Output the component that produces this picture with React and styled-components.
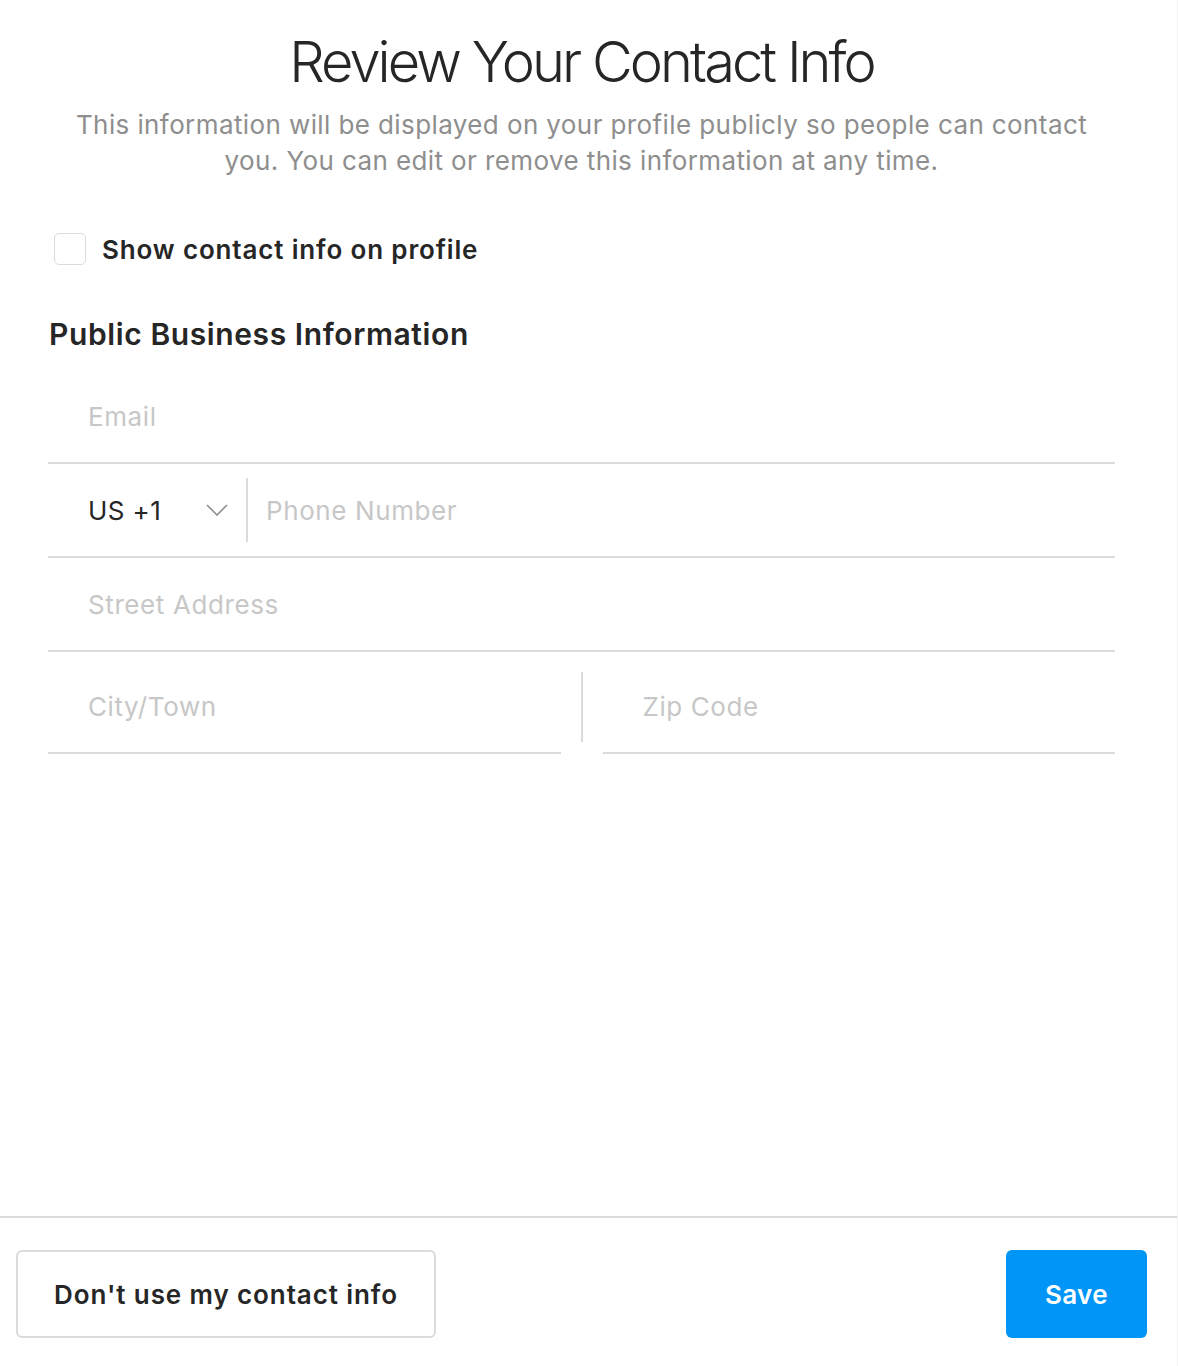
import React from "react";
import styled, { createGlobalStyle } from "styled-components";

const GlobalStyle = createGlobalStyle`
  html, body {
    margin: 0;
    padding: 0;
    background: #ffffff;
  }
  body {
    font-family: Inter, "Liberation Sans", sans-serif;
    color: #262626;
  }
`;

const StyledPage = styled.div`
  width: 1178px;
  height: 1366px;
  display: flex;
  flex-direction: column;
  box-sizing: border-box;
  border-right: 1px solid #f4f4f4;
`;

const StyledContent = styled.div`
  flex: 1;
  padding: 30px 62px 0 48px;
  display: flex;
  flex-direction: column;
`;

const StyledTitle = styled.h1`
  margin: 0;
  text-align: center;
  font-size: 56px;
  line-height: 64px;
  font-weight: 300;
  letter-spacing: -2.95px;
  color: #262626;
`;

const StyledSubtitle = styled.p`
  margin: 13px 22px 0;
  text-align: center;
  font-size: 26px;
  line-height: 36px;
  font-weight: 400;
  letter-spacing: 0.4px;
  color: #8e8e8e;
`;

const StyledCheckRow = styled.label`
  display: flex;
  align-items: center;
  gap: 16px;
  margin-top: 54px;
  padding-left: 6px;
  font-size: 26px;
  font-weight: 600;
  letter-spacing: 0.85px;
  color: #262626;
`;

const StyledCheckbox = styled.span`
  width: 30px;
  height: 30px;
  border: 1px solid #dbdbdb;
  border-radius: 5px;
  box-sizing: content-box;
`;

const StyledSectionTitle = styled.h2`
  margin: 51px 0 0 1px;
  font-size: 30px;
  line-height: 36px;
  font-weight: 600;
  letter-spacing: 0.6px;
  color: #262626;
`;

const StyledForm = styled.div`
  margin-top: 18px;
  display: flex;
  flex-direction: column;
`;

const StyledRow = styled.div`
  display: flex;
  align-items: center;
  height: ${(p) => p.$height || 94}px;
  border-bottom: ${(p) => (p.$split ? "none" : "2px solid #dbdbdb")};
  box-sizing: border-box;
`;

const StyledHalf = styled.div`
  flex: 1;
  height: 100%;
  display: flex;
  align-items: center;
  padding-top: 8px;
  border-bottom: 2px solid #dbdbdb;
  box-sizing: border-box;
`;

const StyledPlaceholder = styled.span`
  padding-left: ${(p) => p.$pad ?? 40}px;
  font-size: 26px;
  font-weight: 400;
  letter-spacing: 0.6px;
  color: #c7c7c7;
`;

const StyledCountry = styled.div`
  display: flex;
  align-items: center;
  justify-content: space-between;
  width: 140px;
  padding: 0 18px 0 40px;
  font-size: 26px;
  letter-spacing: 0.4px;
  color: #262626;
`;

const StyledDivider = styled.div`
  width: 2px;
  height: ${(p) => p.$h}px;
  background: #dbdbdb;
  margin: ${(p) => p.$margin};
  align-self: ${(p) => p.$align || "center"};
`;

const StyledFooter = styled.div`
  border-top: 2px solid #dbdbdb;
  height: 150px;
  box-sizing: border-box;
  display: flex;
  justify-content: space-between;
  align-items: flex-start;
  padding: 32px 30px 0 16px;
`;

const StyledButton = styled.button`
  height: 88px;
  border-radius: 6px;
  font-family: Inter, "Liberation Sans", sans-serif;
  font-size: 26px;
  font-weight: 600;
  letter-spacing: ${(p) => (p.$primary ? "0.4px" : "0.9px")};
  cursor: pointer;
  border: ${(p) => (p.$primary ? "none" : "2px solid #dbdbdb")};
  background: ${(p) => (p.$primary ? "#0095f6" : "#ffffff")};
  color: ${(p) => (p.$primary ? "#ffffff" : "#262626")};
  width: ${(p) => p.$width}px;
`;

const Chevron = () => (
  <svg width="22" height="12" viewBox="0 0 22 12" fill="none">
    <path d="M1 1 L11 11 L21 1" stroke="#8e8e8e" strokeWidth="1.6" />
  </svg>
);

const App = () => {
  return (
    <StyledPage>
      <GlobalStyle />
      <StyledContent>
        <StyledTitle>Review Your Contact Info</StyledTitle>
        <StyledSubtitle>
          This information will be displayed on your profile publicly so people can contact
          you. You can edit or remove this information at any time.
        </StyledSubtitle>

        <StyledCheckRow>
          <StyledCheckbox />
          Show contact info on profile
        </StyledCheckRow>

        <StyledSectionTitle>Public Business Information</StyledSectionTitle>

        <StyledForm>
          <StyledRow>
            <StyledPlaceholder>Email</StyledPlaceholder>
          </StyledRow>
          <StyledRow>
            <StyledCountry>
              US +1
              <Chevron />
            </StyledCountry>
            <StyledDivider $h={64} $margin="0 18px 0 0" />
            <StyledPlaceholder $pad={0}>Phone Number</StyledPlaceholder>
          </StyledRow>
          <StyledRow>
            <StyledPlaceholder>Street Address</StyledPlaceholder>
          </StyledRow>
          <StyledRow $height={102} $split>
            <StyledHalf>
              <StyledPlaceholder>City/Town</StyledPlaceholder>
            </StyledHalf>
            <StyledDivider $h={70} $margin="20px 20px 0 20px" $align="flex-start" />
            <StyledHalf>
              <StyledPlaceholder>Zip Code</StyledPlaceholder>
            </StyledHalf>
          </StyledRow>
        </StyledForm>
      </StyledContent>

      <StyledFooter>
        <StyledButton $width={420}>Don't use my contact info</StyledButton>
        <StyledButton $primary $width={141}>Save</StyledButton>
      </StyledFooter>
    </StyledPage>
  );
};

export default App;
